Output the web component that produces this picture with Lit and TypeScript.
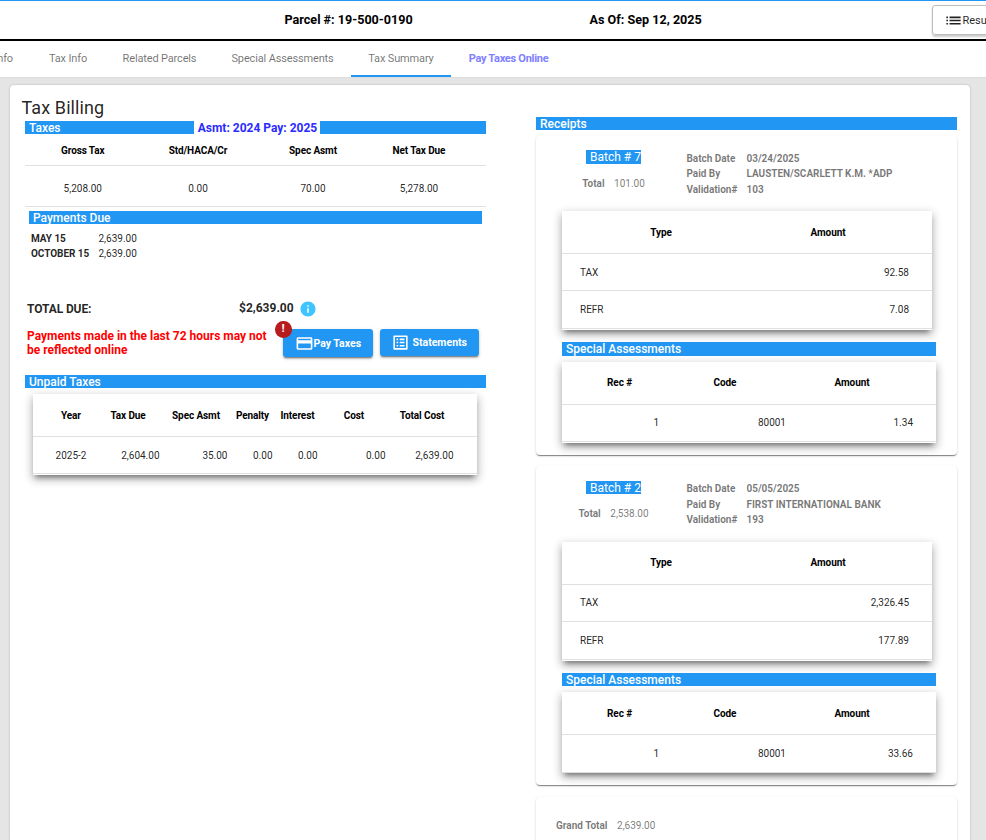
import { LitElement, html, css } from "lit";
import { customElement, property } from "lit/decorators.js";

interface Batch {
  num: string;
  total: string;
  date: string;
  paidBy: string;
  validation: string;
  lines: [string, string][];
  specials: [string, string, string][];
}

const BATCHES: Batch[] = [
  {
    num: "7",
    total: "101.00",
    date: "03/24/2025",
    paidBy: "LAUSTEN/SCARLETT K.M. *ADP",
    validation: "103",
    lines: [["TAX", "92.58"], ["REFR", "7.08"]],
    specials: [["1", "80001", "1.34"]],
  },
  {
    num: "2",
    total: "2,538.00",
    date: "05/05/2025",
    paidBy: "FIRST INTERNATIONAL BANK",
    validation: "193",
    lines: [["TAX", "2,326.45"], ["REFR", "177.89"]],
    specials: [["1", "80001", "33.66"]],
  },
];

const TABS: [string, string][] = [
  ["Parcel Info", "first"],
  ["Tax Info", ""],
  ["Related Parcels", ""],
  ["Special Assessments", ""],
  ["Tax Summary", "active"],
  ["Pay Taxes Online", "pay"],
];

const ICONS: Record<string, string> = {
  list: "M3 13h2v-2H3v2zm0 4h2v-2H3v2zm0-8h2V7H3v2zm4 4h14v-2H7v2zm0 4h14v-2H7v2zM7 7v2h14V7H7z",
  card: "M20 4H4c-1.11 0-1.99.89-1.99 2L2 18c0 1.11.89 2 2 2h16c1.11 0 2-.89 2-2V6c0-1.11-.89-2-2-2zm0 14H4v-6h16v6zm0-10H4V6h16v2z",
  listAlt:
    "M19 5v14H5V5h14m1.1-2H3.9c-.5 0-.9.4-.9.9v16.2c0 .4.4.9.9.9h16.2c.4 0 .9-.5.9-.9V3.900c0-.5-.5-.9-.9-.9zM11 7h6v2h-6V7zm0 4h6v2h-6v-2zm0 4h6v2h-6zM7 7h2v2H7zm0 4h2v2H7zm0 4h2v2H7z",
  info: "M12 2C6.480 2 2 6.480 2 12s4.480 10 10 10 10-4.480 10-10S17.520 2 12 2zm1 15h-2v-6h2v6zm0-8h-2V7h2v2z",
};

const icon = (name: string, cls: string) =>
  html`<svg class=${cls} viewBox="0 0 24 24"><path fill="currentColor" d=${ICONS[name]}></path></svg>`;

@customElement("data-table")
export class DataTable extends LitElement {
  @property() kind = "";
  @property({ attribute: false }) head: string[] = [];
  @property({ attribute: false }) rows: string[][] = [];

  static styles = css`
    :host {
      display: block;
      background: #fff;
      font-size: 10px;
      line-height: 12px;
      color: rgba(0, 0, 0, 0.87);
    }
    :host([raised]) {
      box-shadow: 0 5px 5px -3px rgba(0, 0, 0, 0.4), 0 4px 8px 1px rgba(0, 0, 0, 0.17), 0 3px 10px 1px rgba(0, 0, 0, 0.12);
      padding-bottom: 1px;
    }
    .row {
      display: grid;
      align-items: center;
      height: 37px;
      border-bottom: 1px solid #e0e0e0;
      box-sizing: content-box;
    }
    .row > div {
      padding-top: 1px;
    }
    .head {
      height: 42px;
      font-weight: 700;
      color: #000;
      text-align: center;
      letter-spacing: -0.1px;
    }
    .row:not(.head) {
      text-align: right;
    }
    .row:not(.head) > div {
      padding-right: 2.5px;
    }
    .taxes {
      grid-template-columns: 115.5px 115px 115px 97px;
    }
    .taxes.head {
      height: 31px;
    }
    .row.taxes.head > div {
      padding-top: 2px;
    }
    .taxes:not(.head) {
      height: 36px;
      padding-top: 4px;
      text-align: center;
    }
    .row.taxes:not(.head) > div {
      padding-right: 0;
    }
    .unpaid {
      grid-template-columns: 46px 68px 68px 45px 45px 68px 68px;
      padding-left: 15px;
    }
    .unpaid:not(.head) {
      height: 36px;
    }
    .row.unpaid > div {
      padding-top: 2px;
    }
    .row.unpaid:not(.head) > div:first-child {
      text-align: center;
      padding-right: 0;
    }
    .lines {
      grid-template-columns: 167px 167px;
      padding-left: 15.5px;
    }
    .lines:not(.head) {
      height: 36.2px;
    }
    .row.lines:not(.head):last-child {
      height: 36.8px;
    }
    .row.lines:not(.head):last-child > div {
      padding-top: 1.5px;
    }
    .row.lines:not(.head) > div:first-child {
      text-align: left;
      padding-left: 2.5px;
    }
    .specials {
      grid-template-columns: 84px 127px 127px;
      padding-left: 15.5px;
    }
    .specials:not(.head) {
      height: 36.5px;
    }
  `;

  render() {
    return html`
      <div class="row head ${this.kind}">${this.head.map((h) => html`<div>${h}</div>`)}</div>
      ${this.rows.map((r) => html`<div class="row ${this.kind}">${r.map((c) => html`<div>${c}</div>`)}</div>`)}
    `;
  }
}

@customElement("receipt-card")
export class ReceiptCard extends LitElement {
  @property({ attribute: false }) batch!: Batch;

  static styles = css`
    :host {
      display: block;
      box-sizing: border-box;
      height: 319px;
      padding: 14.2px 21px 0 26px;
      margin-bottom: 11.7px;
      border-radius: 4px;
      background: #fff;
      box-shadow: 0 2px 1px -1px rgba(0, 0, 0, 0.3), 0 1px 1px 0 rgba(0, 0, 0, 0.2), 0 1px 3px 0 rgba(0, 0, 0, 0.12);
      color: rgba(0, 0, 0, 0.54);
      font-size: 10px;
    }
    .top {
      display: grid;
      grid-template-columns: 103px 21.5px auto;
      height: 61.3px;
    }
    .left {
      display: flex;
      flex-direction: column;
      align-items: center;
      gap: 13px;
    }
    .tag {
      box-sizing: border-box;
      width: 55px;
      height: 13.9px;
      padding-left: 4px;
      background: #2196f3;
      color: #fff;
      font-size: 12px;
      line-height: 14px;
      white-space: nowrap;
    }
    .total {
      display: flex;
      gap: 9.5px;
      line-height: 14px;
    }
    b {
      font-weight: 700;
    }
    .meta {
      display: grid;
      grid-template-columns: 60px auto;
      grid-auto-rows: 15.5px;
      line-height: 15.5px;
      font-weight: 700;
      align-content: start;
      padding-top: 0.85px;
      letter-spacing: -0.03px;
    }
    .lines {
      width: 370px;
      height: 119px;
      box-sizing: border-box;
    }
    .bar {
      height: 13.4px;
      margin-top: 12.2px;
      margin-bottom: 5.8px;
      padding-left: 4px;
      background: #2196f3;
      color: #fff;
      font-size: 12px;
      line-height: 14px;
      font-weight: 500;
    }
    .specials {
      height: 81px;
      box-sizing: border-box;
    }
  `;

  render() {
    const b = this.batch;
    return html`
      <div class="top">
        <div class="left">
          <div class="tag">Batch # ${b.num}</div>
          <div class="total"><b>Total</b><span>${b.total}</span></div>
        </div>
        <div></div>
        <div class="meta">
          <span>Batch Date</span><span>${b.date}</span>
          <span>Paid By</span><span>${b.paidBy}</span>
          <span>Validation#</span><span>${b.validation}</span>
        </div>
      </div>
      <data-table class="lines" raised kind="lines" .head=${["Type", "Amount"]} .rows=${b.lines}></data-table>
      <div class="bar">Special Assessments</div>
      <data-table class="specials" raised kind="specials" .head=${["Rec #", "Code", "Amount"]} .rows=${b.specials}></data-table>
    `;
  }
}

@customElement("app-root")
export class AppRoot extends LitElement {
  static styles = css`
    :host {
      display: flex;
      flex-direction: column;
      width: 986px;
      height: 840px;
      overflow: hidden;
      background: #e5e5e5;
      font-family: Roboto, "Liberation Sans", sans-serif;
      color: rgba(0, 0, 0, 0.87);
    }
    .header {
      flex: none;
      box-sizing: border-box;
      height: 41px;
      border-top: 1px solid #2196f3;
      border-bottom: 2px solid #000;
      background: #fff;
      display: grid;
      grid-template-columns: 284.5px 305px 342.5px 80px;
      font-size: 12.6px;
      font-weight: 700;
      color: #000;
      line-height: 38px;
    }
    .results {
      box-sizing: border-box;
      margin-top: 4px;
      height: 30px;
      width: 80px;
      border: 1px solid #bdbdbd;
      border-radius: 3px;
      box-shadow: 0 2px 2px rgba(0, 0, 0, 0.2);
      display: flex;
      align-items: center;
      padding-left: 11px;
      font-size: 11px;
      font-weight: 400;
      line-height: 14px;
      color: rgba(0, 0, 0, 0.87);
    }
    .results span {
      padding-top: 1px;
      margin-left: -0.5px;
    }
    .i-list {
      width: 19px;
      height: 19px;
      flex: none;
    }
    .tabs {
      flex: none;
      height: 36px;
      background: #fff;
      border-bottom: 1px solid #dcdcdc;
      display: grid;
      grid-template-columns: 31px 74px 109px 137px 100px 115px;
      font-size: 11px;
      font-weight: 400;
      letter-spacing: -0.15px;
      line-height: 35px;
    }
    .tab {
      display: flex;
      justify-content: center;
      white-space: nowrap;
      color: rgba(0, 0, 0, 0.56);
    }
    .tab.first {
      justify-content: flex-end;
      padding-right: 18px;
    }
    .tab.active {
      box-shadow: inset 0 -2px #2196f3;
    }
    .tab.pay {
      color: #8080ff;
      font-weight: 700;
      letter-spacing: -0.28px;
    }
    .page {
      flex: 1;
      margin: 7px 16px 0 10px;
      border-radius: 4px 4px 0 0;
      background: #fff;
      box-shadow: 0 0 2px rgba(0, 0, 0, 0.28);
      display: grid;
      grid-template-columns: 461px 421px;
      column-gap: 50px;
      padding-left: 15px;
      align-items: start;
      min-height: 0;
    }
    h1 {
      margin: 11px 0 1px -3.5px;
      font-size: 18px;
      line-height: 24px;
      height: 24px;
      font-weight: 400;
      letter-spacing: 0.1px;
    }
    .bar {
      height: 13px;
      padding-left: 4px;
      background: #2196f3;
      color: #fff;
      font-size: 12px;
      font-weight: 500;
      line-height: 14px;
    }
    .bar.split {
      display: flex;
    }
    .bar .title {
      width: 165px;
    }
    .bar .years {
      box-sizing: border-box;
      width: 126px;
      padding-left: 1px;
      text-align: center;
      background: #fff;
      color: #2b2bff;
      font-weight: 700;
      white-space: nowrap;
    }
    .bar.pad {
      margin: 4px 4px 0;
    }
    .dues {
      display: grid;
      grid-template-columns: 67.5px auto;
      grid-auto-rows: 15px;
      line-height: 15px;
      font-size: 10px;
      margin: 7px 0 0 6px;
    }
    .dues b {
      font-weight: 700;
      letter-spacing: -0.05px;
    }
    .due-total {
      display: flex;
      align-items: center;
      margin: 39px 0 0 2px;
      height: 16px;
      font-size: 12px;
      font-weight: 700;
    }
    .due-total .label {
      width: 212px;
      letter-spacing: -0.1px;
      padding-top: 2px;
    }
    .i-info {
      width: 18px;
      height: 18px;
      margin: 2px 0 0 5.5px;
      color: #40c4ff;
    }
    .actions {
      display: flex;
      align-items: flex-start;
      margin: 13px 0 0 2px;
      height: 46px;
    }
    .warn {
      width: 256px;
      font-size: 12px;
      line-height: 14px;
      font-weight: 700;
      color: #f00;
    }
    .btn {
      position: relative;
      box-sizing: border-box;
      display: flex;
      align-items: center;
      height: 28px;
      border-radius: 3px;
      background: #2196f3;
      color: #fff;
      font-size: 10.5px;
      font-weight: 700;
      white-space: nowrap;
      box-shadow: 0 2px 1px -1px rgba(0, 0, 0, 0.3), 0 2px 2px rgba(0, 0, 0, 0.2), 0 1px 4px rgba(0, 0, 0, 0.12);
    }
    .btn.paybtn {
      width: 90px;
      padding-left: 11.5px;
    }
    .btn.stmt {
      width: 99px;
      height: 27px;
      margin-left: 7px;
      padding-left: 11px;
      gap: 2.5px;
    }
    .i-btn {
      width: 19px;
      height: 19px;
      flex: none;
    }
    .badge {
      position: absolute;
      left: -8px;
      top: -8px;
      width: 16.5px;
      height: 16.5px;
      border-radius: 50%;
      background: #b71c1c;
      color: #fff;
      font-size: 10px;
      line-height: 16.5px;
      text-align: center;
      font-weight: 900;
    }
    .unpaid {
      margin: 6px 9px 0 8px;
    }
    .col2 {
      padding-top: 32px;
    }
    .col2 .bar {
      margin-bottom: 5.67px;
    }
    .grand {
      box-sizing: border-box;
      height: 60px;
      padding: 22px 0 0 20px;
      border-radius: 4px;
      box-shadow: 0 2px 1px -1px rgba(0, 0, 0, 0.3), 0 1px 1px 0 rgba(0, 0, 0, 0.2), 0 1px 3px 0 rgba(0, 0, 0, 0.12);
      font-size: 10px;
      line-height: 14px;
      color: rgba(0, 0, 0, 0.54);
      display: flex;
      gap: 9.5px;
    }
  `;

  render() {
    return html`
      <div class="header">
        <div></div>
        <div>Parcel #: 19-500-0190</div>
        <div>As Of: Sep 12, 2025</div>
        <div class="results">${icon("list", "i-list")}<span>Results</span></div>
      </div>
      <div class="tabs">${TABS.map(([label, cls]) => html`<div class="tab ${cls}">${label}</div>`)}</div>
      <div class="page">
        <div>
          <h1>Tax Billing</h1>
          <div class="bar split">
            <div class="title">Taxes</div>
            <div class="years">Asmt: 2024 Pay: 2025</div>
          </div>
          <data-table
            kind="taxes"
            .head=${["Gross Tax", "Std/HACA/Cr", "Spec Asmt", "Net Tax Due"]}
            .rows=${[["5,208.00", "0.00", "70.00", "5,278.00"]]}
          ></data-table>
          <div class="bar pad">Payments Due</div>
          <div class="dues">
            <b>MAY 15</b><span>2,639.00</span>
            <b>OCTOBER 15</b><span>2,639.00</span>
          </div>
          <div class="due-total">
            <span class="label">TOTAL DUE:</span><span>$2,639.00</span>${icon("info", "i-info")}
          </div>
          <div class="actions">
            <div class="warn">Payments made in the last 72 hours may not<br />be reflected online</div>
            <div class="btn paybtn">${icon("card", "i-btn")}<span>Pay Taxes</span><span class="badge">!</span></div>
            <div class="btn stmt">${icon("listAlt", "i-btn")}<span>Statements</span></div>
          </div>
          <div class="bar">Unpaid Taxes</div>
          <data-table
            class="unpaid"
            raised
            kind="unpaid"
            .head=${["Year", "Tax Due", "Spec Asmt", "Penalty", "Interest", "Cost", "Total Cost"]}
            .rows=${[["2025-2", "2,604.00", "35.00", "0.00", "0.00", "0.00", "2,639.00"]]}
          ></data-table>
        </div>
        <div class="col2">
          <div class="bar">Receipts</div>
          ${BATCHES.map((b) => html`<receipt-card .batch=${b}></receipt-card>`)}
          <div class="grand"><b>Grand Total</b><span>2,639.00</span></div>
        </div>
      </div>
    `;
  }
}
